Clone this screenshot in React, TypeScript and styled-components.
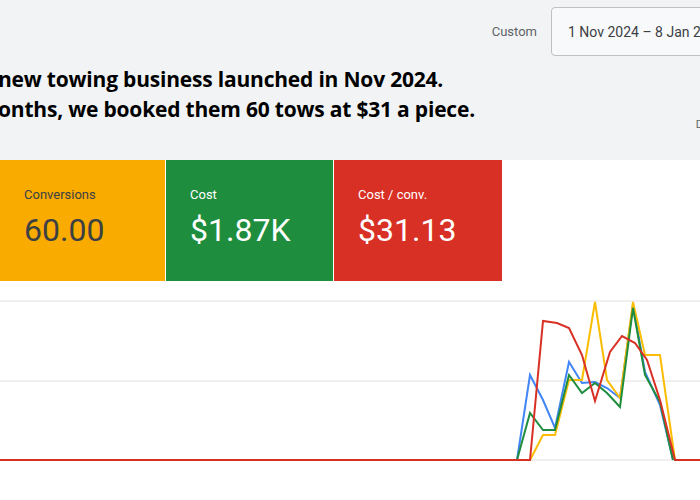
import React from "react";
import styled, { createGlobalStyle } from "styled-components";

const G = createGlobalStyle`
  html, body { margin: 0; padding: 0; width: 700px; height: 500px; overflow: hidden; background: #fff; }
  * { box-sizing: border-box; }
`;
const Header = styled.div`
  background: #f1f3f4; height: 160px; position: relative; font-family: Roboto, "Liberation Sans", sans-serif;
`;
const TopRow = styled.div`
  display: flex; justify-content: flex-end; align-items: center; gap: 14px; padding-top: 7px;
`;
const Label = styled.span` color: #5f6368; font-size: 13px; `;
const DateBox = styled.div`
  width: 160px; height: 49px; margin-right: -11px; border: 1px solid #bdc1c6; border-radius: 4px;
  background: #f8f9fa; display: flex; align-items: center; padding-left: 16px; font-size: 14px; color: #3c4043; white-space: nowrap; overflow: hidden;
`;
const Caption = styled.div`
  font-family: "Open Sans", "Liberation Sans", sans-serif; font-weight: 700; font-size: 21px; line-height: 30px;
  letter-spacing: -0.2px; color: #000; margin-top: 8px; margin-left: -2px; white-space: nowrap;
`;
const Edge = styled.span`
  position: absolute; right: -3px; top: 118px; font-size: 11px; color: #5f6368;
`;
const Cards = styled.div` display: flex; height: 121px; `;
const Card = styled.div<{ $bg: string; $w: number; $fg: string }>`
  width: ${p => p.$w}px; background: ${p => p.$bg}; color: ${p => p.$fg};
  padding: 27px 0 0 24px; font-family: Roboto, "Liberation Sans", sans-serif; margin-right: 1px;
`;
const CardLabel = styled.div` font-size: 13px; `;
const CardValue = styled.div` font-size: 32px; margin-top: 9px; `;
const Chart = styled.svg` display: block; `;

const pts = (a: number[][]) => a.map(p => p.join(",")).join(" ");
const red = [[0,460],[530,460],[543,321],[557,323],[569,328],[582,355],[595,401],[610,352],[622,336],[635,343],[647,360],[660,400],[675,460],[700,460]];
const blue = [[517,460],[530,375],[543,400],[555,428],[569,362],[582,383],[595,382],[607,388],[620,398],[633,305],[645,372],[660,405],[673,460]];
const green = [[517,460],[530,413],[543,430],[555,430],[569,375],[582,393],[595,383],[607,393],[620,407],[633,308],[645,375],[660,402],[673,460]];
const yellow = [[530,460],[543,435],[555,435],[569,380],[582,380],[595,302],[607,380],[620,398],[633,302],[645,355],[660,355],[675,460]];
const off = (a: number[][]) => a.map(([x, y]) => [x, y - 281]);

export default function App() {
  return (
    <>
      <G />
      <Header>
        <TopRow><Label>Custom</Label><DateBox>1 Nov 2024 – 8 Jan 2025</DateBox></TopRow>
        <Caption>new towing business launched in Nov 2024.<br />onths, we booked them 60 tows at $31 a piece.</Caption>
        <Edge>D</Edge>
      </Header>
      <Cards>
        <Card $bg="#f9ab00" $w={165} $fg="#3c4043"><CardLabel>Conversions</CardLabel><CardValue>60.00</CardValue></Card>
        <Card $bg="#1e8e3e" $w={167} $fg="#fff"><CardLabel>Cost</CardLabel><CardValue>$1.87K</CardValue></Card>
        <Card $bg="#d93025" $w={168} $fg="#fff"><CardLabel>Cost / conv.</CardLabel><CardValue>$31.13</CardValue></Card>
      </Cards>
      <Chart width="700" height="219">
        <line x1="0" x2="700" y1="20" y2="20" stroke="#e0e0e0" />
        <line x1="0" x2="700" y1="100" y2="100" stroke="#e0e0e0" />
        <line x1="0" x2="700" y1="179" y2="179" stroke="#e0e0e0" />
        <polyline points={pts(off(blue))} fill="none" stroke="#4285f4" strokeWidth="2" />
        <polyline points={pts(off(yellow))} fill="none" stroke="#fbbc04" strokeWidth="2" />
        <polyline points={pts(off(green))} fill="none" stroke="#1e8e3e" strokeWidth="2" />
        <polyline points={pts(off(red))} fill="none" stroke="#d93025" strokeWidth="2" />
      </Chart>
    </>
  );
}
